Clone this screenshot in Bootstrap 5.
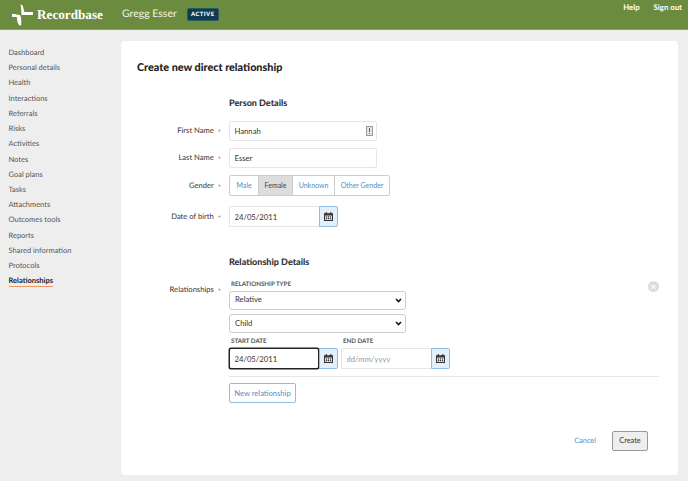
<!doctype html>
<html lang="en"><head><meta charset="utf-8">
<title>Recordbase</title>
<link rel="stylesheet" href="https://cdn.jsdelivr.net/npm/bootstrap@5.3.0/dist/css/bootstrap.min.css">
<style>
html,body{height:481px;overflow:hidden}
body{background:#eee;font-family:Lato,"Liberation Sans",sans-serif;font-size:8px;color:#333;line-height:1.2;text-rendering:geometricPrecision}
.topbar{height:30px;background:#6b8c3e;border-bottom:1px solid #86a35f;color:#fff}
.brand-mark{margin-left:11px;width:23px;height:24px;flex:none}
.brand-name{font-family:"Liberation Serif",serif;font-size:13.2px;font-weight:700;margin-left:3px;width:85px}
.person-name{font-size:10.5px;width:65px;color:#f2f5ec}
.state-tag{background:#0d3b50;color:#fff;font-size:6px;font-weight:900;letter-spacing:.4px;padding:2px 3px;border-radius:2px;border:1px solid #2a5a5e}
.top-links{padding-right:6px;gap:14px;font-weight:700;font-size:7.8px;align-self:flex-start;padding-top:3px}
.side{width:121px;padding:15px 0 0 8.5px;flex:none}
.side a{display:block;height:15.22px;line-height:15px;color:#555;text-decoration:none;font-size:7.5px}
.side a.on{color:#222;font-weight:700}
.side a.on span{border-bottom:1.5px solid #ee9a5a;display:inline-block;line-height:10px}
.panel{width:557px;height:434px;margin-top:11px;background:#fff;border-radius:4px;padding:0 16px}
.panel-title{font-size:10.8px;font-weight:900;color:#222;margin:0;padding-top:20px;height:57px;line-height:13px}
.sect{font-size:9px;font-weight:900;color:#333;margin:0 0 0 92px;height:23px;line-height:9px}
.sect-two{margin-top:29.500px;height:22.500px}
.frow{display:flex;align-items:center;margin-bottom:7px}
.frow-wide{margin-bottom:10px}
.flabel{width:92px;flex:none;text-align:right;padding-right:8px;font-size:7.6px;color:#333}
.flabel::after{content:"*";color:#888;margin-left:4px;vertical-align:-2px;line-height:0}
.flabel-top{padding-top:5.500px}
.inp{height:20px;font-size:7.7px;padding:0 4.500px;border:1px solid #e6e6e6;border-radius:2px;color:#333;width:148px;box-shadow:none}
.inp::placeholder{color:#999}
.key-icon{position:absolute;right:4px;top:5px;width:7px;height:10px}
.seg .btn{font-size:7px;height:21px;padding:0;line-height:19px;color:#4f8fc8;border-color:#ccc;border-radius:0;background:#fff}
.seg .s1{width:30px}.seg .s2{width:35px}.seg .s3{width:43px}.seg .s4{width:56px}
.seg .btn:first-child{border-radius:2px 0 0 2px}
.seg .btn:last-child{border-radius:0 2px 2px 0}
.seg .btn.picked{background:#ddd;color:#444}
.date-in{width:90px;height:21px;border-right:0;border-radius:2px 0 0 2px}
.date-in.focused{border:1px solid #222;border-radius:2px;box-shadow:0 0 0 .5px #222}
.cal-btn{width:19px;height:21px;padding:0;background:#e3eff9;border:1px solid #8fbde3;border-radius:0 2px 2px 0;display:flex;align-items:center;justify-content:center}
.cal-btn svg{width:9px;height:9px}
.tiny{font-size:6.2px;font-weight:700;color:#555;text-transform:uppercase;line-height:11.500px;padding-left:2px}
.tiny-gap{line-height:12px}
.sel{width:177px;height:19px;font-size:7.7px;padding:0 5px;border:1px solid #ccc;border-radius:3px;color:#333;background-size:7px 5px;background-position:right 3px center;background-image:url("data:image/svg+xml,%3csvg xmlns='http://www.w3.org/2000/svg' viewBox='0 0 7 5'%3e%3cpath fill='none' stroke='%23111' stroke-width='1.600' d='M1 1l2.500 2.500L6 1'/%3e%3c/svg%3e")}
.sel-first{margin-bottom:4.500px}
.date-pair{margin-top:3px}
.date-one{width:112px}
.rel-block{width:430px;position:relative}
.rm{position:absolute;right:0;top:1.500px;width:11px;height:11px;border-radius:50%;background:#ddd;color:#fff;font-size:10px;font-weight:700;line-height:11px;text-align:center}
.rule{border-top:1px solid #e6e6e6;margin:7px 0 6px}
.new-btn{font-size:7.6px;height:20px;width:67px;padding:0;line-height:17px;color:#4f8fc8;border:1px solid #8fbde3;border-radius:2px;background:#fff}
.foot{position:absolute;right:30px;bottom:24px;gap:16px}
.cancel-link{font-size:7.4px;color:#4f8fc8;text-decoration:none}
.create-btn{font-size:7.4px;width:36px;height:20px;padding:0;background:#eee;border:1px solid #999;border-radius:2px;color:#333}
</style></head>
<body>
<header class="topbar d-flex align-items-center">
  <svg class="brand-mark" viewBox="0 0 23 24" aria-hidden="true"><path fill="#fff" d="M9.500 1L12 3C12.500 6 13 8 13.500 9L22 9V12L10.500 12C10.500 8 10 4 9.500 1z"/><path fill="#fff" d="M1 11C4 11 7 11.500 9.500 12.500C10.500 16 10.500 20 10 23C8 22 7 21 6.500 19C6 17 6 15 5.800 14L1 14z"/></svg>
  <div class="brand-name">Recordbase</div>
  <div class="person-name">Gregg Esser</div>
  <span class="state-tag">ACTIVE</span>
  <div class="ms-auto d-flex top-links"><span>Help</span><span>Sign out</span></div>
</header>
<div class="d-flex">
  <nav class="side">
    <a href="#">Dashboard</a><a href="#">Personal details</a><a href="#">Health</a><a href="#">Interactions</a><a href="#">Referrals</a><a href="#">Risks</a><a href="#">Activities</a><a href="#">Notes</a><a href="#">Goal plans</a><a href="#">Tasks</a><a href="#">Attachments</a><a href="#">Outcomes tools</a><a href="#">Reports</a><a href="#">Shared information</a><a href="#">Protocols</a><a href="#" class="on"><span>Relationships</span></a>
  </nav>
  <main class="panel position-relative">
    <h1 class="panel-title">Create new direct relationship</h1>
    <h2 class="sect">Person Details</h2>
    <div class="frow"><div class="flabel">First Name</div>
      <div class="position-relative"><input class="form-control inp" value="Hannah">
        <svg class="key-icon" viewBox="0 0 7 10"><rect x=".5" y=".5" width="6" height="9" fill="#e4e4e4" stroke="#999"/><rect x="3" y="2" width="1" height="4" fill="#666"/><rect x="3" y="7" width="1" height="1" fill="#666"/></svg></div></div>
    <div class="frow"><div class="flabel">Last Name</div><input class="form-control inp" value="Esser"></div>
    <div class="frow frow-wide"><div class="flabel">Gender</div>
      <div class="btn-group seg"><button class="btn s1">Male</button><button class="btn s2 picked">Female</button><button class="btn s3">Unknown</button><button class="btn s4">Other Gender</button></div></div>
    <div class="frow"><div class="flabel">Date of birth</div>
      <div class="d-flex"><input class="form-control inp date-in" value="24/05/2011"><button class="cal-btn"><svg viewBox="0 0 8 8"><path fill="#333" d="M0 1h1.500V0h1v1h3V0h1v1H8v7H0zM1 3v4h6V3z"/><path fill="#333" d="M1.800 3.800h1v1h-1zM3.500 3.800h1v1h-1zM5.200 3.800h1v1h-1zM1.800 5.400h1v1h-1zM3.500 5.400h1v1h-1zM5.200 5.400h1v1h-1z"/></svg></button></div></div>
    <h2 class="sect sect-two">Relationship Details</h2>
    <div class="d-flex">
      <div class="flabel flabel-top">Relationships</div>
      <div class="rel-block">
        <button class="rm border-0 p-0" aria-label="Remove">×</button>
        <div class="tiny">Relationship type</div>
        <select class="form-select sel sel-first"><option>Relative</option></select>
        <select class="form-select sel"><option>Child</option></select>
        <div class="d-flex date-pair">
          <div class="date-one"><div class="tiny tiny-gap">Start date</div>
            <div class="d-flex"><input class="form-control inp date-in focused" value="24/05/2011"><button class="cal-btn"><svg viewBox="0 0 8 8"><path fill="#333" d="M0 1h1.500V0h1v1h3V0h1v1H8v7H0zM1 3v4h6V3z"/><path fill="#333" d="M1.800 3.800h1v1h-1zM3.500 3.800h1v1h-1zM5.200 3.800h1v1h-1zM1.800 5.400h1v1h-1zM3.500 5.400h1v1h-1zM5.200 5.400h1v1h-1z"/></svg></button></div></div>
          <div><div class="tiny tiny-gap">End date</div>
            <div class="d-flex"><input class="form-control inp date-in" placeholder="dd/mm/yyyy"><button class="cal-btn"><svg viewBox="0 0 8 8"><path fill="#333" d="M0 1h1.500V0h1v1h3V0h1v1H8v7H0zM1 3v4h6V3z"/><path fill="#333" d="M1.800 3.800h1v1h-1zM3.500 3.800h1v1h-1zM5.200 3.800h1v1h-1zM1.800 5.400h1v1h-1zM3.500 5.400h1v1h-1zM5.200 5.400h1v1h-1z"/></svg></button></div></div>
        </div>
        <div class="rule"></div>
        <button class="btn new-btn">New relationship</button>
      </div>
    </div>
    <div class="foot d-flex align-items-center"><a href="#" class="cancel-link">Cancel</a><button class="btn create-btn">Create</button></div>
  </main>
</div>
<script src="https://cdn.jsdelivr.net/npm/bootstrap@5.3.0/dist/js/bootstrap.bundle.min.js"></script>
</body></html>
